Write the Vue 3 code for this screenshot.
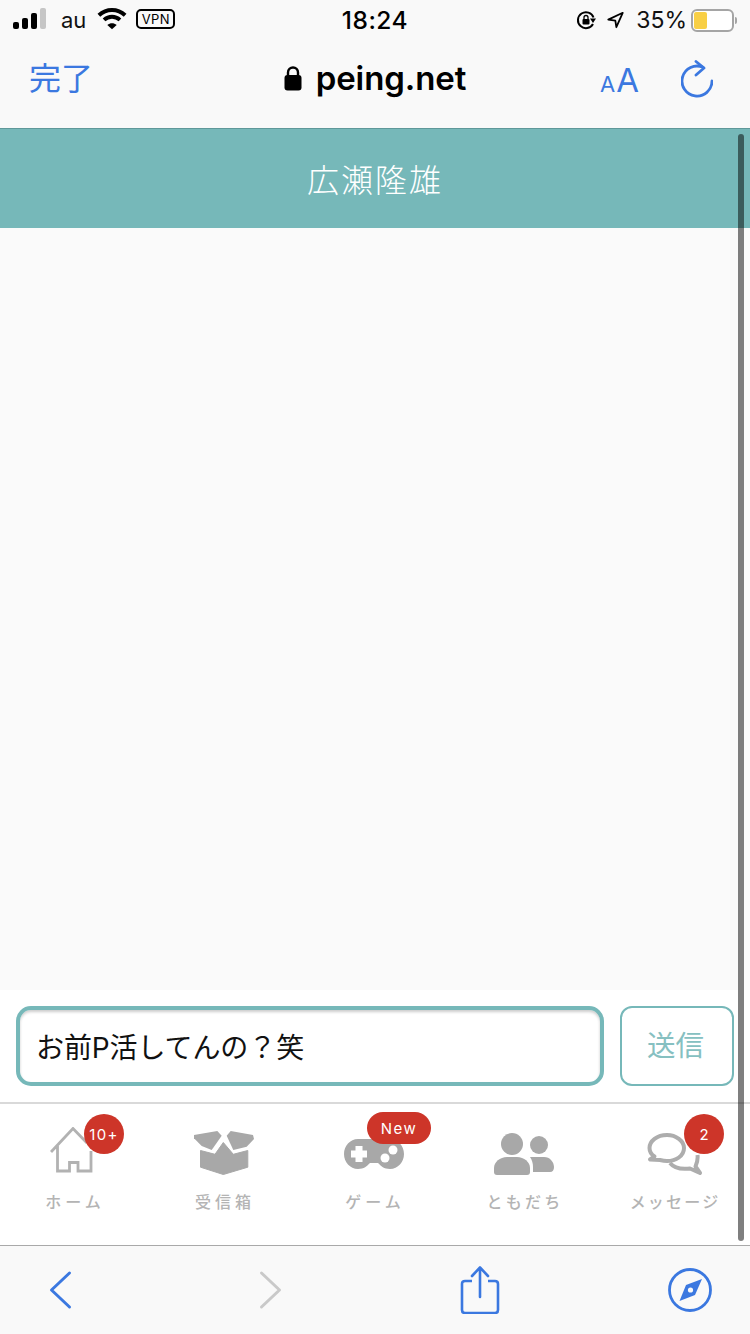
<script setup>
const navItems = [
  { key: 'home', label: 'ホーム', badge: '10+', badgeType: 'round' },
  { key: 'box', label: '受信箱' },
  { key: 'game', label: 'ゲーム', badge: 'New', badgeType: 'pill' },
  { key: 'friends', label: 'ともだち' },
  { key: 'msg', label: 'メッセージ', badge: '2', badgeType: 'round' },
]
</script>

<template>
  <div class="phone">
    <div class="chrome">
      <div class="status">
        <div class="st-left">
          <svg class="signal" width="34" height="22" viewBox="0 0 34 22">
            <rect x="0" y="14" width="6" height="7" rx="2" fill="#000" />
            <rect x="9" y="10" width="6" height="11" rx="2" fill="#000" />
            <rect x="18" y="5" width="6" height="16" rx="2" fill="#000" />
            <rect x="27" y="0" width="6" height="21" rx="2" fill="#c6c6c6" />
          </svg>
          <span class="carrier">au</span>
          <svg class="wifi" width="30" height="23" viewBox="0 0 32 24">
            <path d="M2 8.5C10 1 22 1 30 8.5" fill="none" stroke="#000" stroke-width="4.2" />
            <path d="M7.5 13.5C12.5 9 19.5 9 24.5 13.5" fill="none" stroke="#000" stroke-width="4.2" />
            <path d="M11 19L16 23.5L21 19C18 16.3 14 16.3 11 19Z" fill="#000" />
          </svg>
          <span class="vpn">VPN</span>
        </div>
        <div class="time">18:24</div>
        <div class="st-right">
          <svg width="20" height="20" viewBox="0 0 20 20">
            <path d="M17.5 7.5A8 8 0 1 0 17 14" fill="none" stroke="#000" stroke-width="2" />
            <path d="M14 8.5L20 8.5L17 13Z" fill="#000" />
            <rect x="6.5" y="9" width="7" height="5.5" rx="1" fill="#000" />
            <path d="M8 9.5V7.5a2 2 0 0 1 4 0V9.5" fill="none" stroke="#000" stroke-width="1.3" />
          </svg>
          <svg class="loc" width="17" height="18" viewBox="0 0 20 20">
            <path d="M18.5 1.5L1.5 9.5L9.8 10.6L11 18.5Z" fill="none" stroke="#000" stroke-width="2.1" stroke-linejoin="round" />
          </svg>
          <span class="pct">35%</span>
          <div class="battery"><div class="level"></div></div>
          <div class="nub"></div>
        </div>
      </div>
      <div class="urlbar">
        <div class="done">完了</div>
        <div class="domain">
          <svg width="18" height="26" viewBox="0 0 18 26">
            <path d="M4 11V7.5a5 5 0 0 1 10 0V11" fill="none" stroke="#000" stroke-width="2.4" />
            <rect x="0.5" y="10" width="17" height="15.5" rx="3" fill="#000" />
          </svg>
          <span>peing.net</span>
        </div>
        <div class="actions">
          <div class="aa"><span class="a-small">A</span><span class="a-big">A</span></div>
          <svg width="32" height="38" viewBox="0 0 32 38">
            <path d="M31 21A15 15 0 1 1 22 7.3" fill="none" stroke="#3b78e0" stroke-width="2.8" stroke-linecap="round" />
            <path d="M15 1.5L23 8L15 15" fill="none" stroke="#3b78e0" stroke-width="2.8" stroke-linecap="round" stroke-linejoin="round" />
          </svg>
        </div>
      </div>
    </div>

    <header class="title">広瀬隆雄</header>
    <main class="content"></main>

    <form class="composer" @submit.prevent>
      <div class="input">お前P活してんの？笑</div>
      <button class="send" type="button">送信</button>
    </form>

    <nav class="tabs">
      <div v-for="item in navItems" :key="item.key" class="tab" :class="'tab-' + item.key">
        <div class="ico">
          <svg v-if="item.key === 'home'" width="46" height="46" viewBox="0 0 46 46">
            <path d="M1 25L23 1.5L37 16M7.5 19V44H19.5V35.5H28V44H41V24" fill="none" stroke="#b2b2b2" stroke-width="2.8" />
          </svg>
          <svg v-else-if="item.key === 'box'" width="64" height="44" viewBox="0 0 64 44">
            <path d="M2 4L25.3 0L29.7 4.7L19.7 19L9.7 15L2 7.3Z" fill="#a8a8a8" />
            <path d="M34.7 4.7L38.7 0L61 4L62 8L54.7 15.7L41.3 19Z" fill="#a8a8a8" />
            <path d="M8.5 19.5L23 23.3L31.3 11.5L41.3 23.3L55.8 19.5V36.2L31.3 43.5L8.5 36.2Z" fill="#a8a8a8" stroke="#a8a8a8" stroke-width="1" stroke-linejoin="round" />
          </svg>
          <svg v-else-if="item.key === 'game'" width="60" height="30" viewBox="0 0 60 30">
            <path d="M14 0H46C54 0 60 7 60 15C60 23 54 30 46 30C40 30 37 27 34 24H26C23 27 20 30 14 30C6 30 0 23 0 15C0 7 6 0 14 0Z" fill="#a8a8a8" />
            <path d="M11.5 7H18.5V11.5H23V18.5H18.5V23H11.5V18.5H7V11.5H11.5Z" fill="#fff" />
            <circle cx="49" cy="11" r="4.5" fill="#fff" />
            <circle cx="41" cy="19" r="4.5" fill="#fff" />
          </svg>
          <svg v-else-if="item.key === 'friends'" width="60" height="42" viewBox="0 0 60 42">
            <circle cx="18" cy="11" r="11" fill="#a8a8a8" />
            <circle cx="45" cy="12" r="9" fill="#a8a8a8" />
            <path d="M0 35C0 29 6 24 13 24H23C30 24 36 29 36 35V39Q36 42 33 42H3Q0 42 0 39Z" fill="#a8a8a8" />
            <path d="M36 24H50C56 24 60 29 60 34Q60 39 56 39H39V34C39 30 38 27 36 24Z" fill="#a8a8a8" />
          </svg>
          <svg v-else width="56" height="44" viewBox="0 0 56 44">
            <path d="M38 17C38 10 30 4 21 4C11 4 3.5 10 3.5 17C3.5 20.5 5.5 23.5 8.5 25.5L4 28.5L14 29C16 29.5 19 30 21 30C30 30 38 25 38 17Z" fill="none" stroke="#adadad" stroke-width="4" stroke-linejoin="round" />
            <path d="M24 32C28 37 36 38.5 44 37.5L54 42L49.5 35.5C51 32 52 28 51.5 24" fill="none" stroke="#adadad" stroke-width="4" stroke-linejoin="round" />
          </svg>
          <span v-if="item.badge" class="badge" :class="[item.badgeType, item.key]">{{ item.badge }}</span>
        </div>
        <div class="label">{{ item.label }}</div>
      </div>
    </nav>

    <div class="toolbar">
      <svg width="25" height="40" viewBox="0 0 25 40">
        <path d="M21.5 3L3.5 20L21.5 37" fill="none" stroke="#3b78e0" stroke-width="3" stroke-linecap="round" stroke-linejoin="round" />
      </svg>
      <svg width="25" height="40" viewBox="0 0 25 40">
        <path d="M3.5 3L21.5 20L3.5 37" fill="none" stroke="#c9c9c9" stroke-width="3" stroke-linecap="round" stroke-linejoin="round" />
      </svg>
      <svg width="40" height="48" viewBox="0 0 40 48">
        <path d="M12 15H5Q2 15 2 18V44Q2 47 5 47H35Q38 47 38 44V18Q38 15 35 15H28" fill="none" stroke="#3b78e0" stroke-width="2.6" />
        <path d="M20 31V2M12 10L20 1.5L28 10" fill="none" stroke="#3b78e0" stroke-width="2.6" stroke-linecap="round" stroke-linejoin="round" />
      </svg>
      <svg width="46" height="46" viewBox="0 0 46 46">
        <circle cx="23" cy="23" r="20.5" fill="none" stroke="#3b78e0" stroke-width="2.8" />
        <path d="M35 12L28 28L12.5 34L19 18Z" fill="#3b78e0" />
        <circle cx="23.5" cy="23" r="2.6" fill="#f9f9f9" />
      </svg>
    </div>

    <div class="scrollbar"></div>
  </div>
</template>

<style>
html, body { margin: 0; padding: 0; }
</style>

<style scoped>
.phone {
  position: relative;
  width: 750px;
  height: 1334px;
  overflow: hidden;
  display: flex;
  flex-direction: column;
  background: #fff;
  font-family: Inter, "Noto Sans CJK JP", sans-serif;
}
.chrome {
  height: 128px;
  flex: none;
  background: #f9f9f9;
  border-bottom: 1px solid #5f9899;
}
.status {
  height: 40px;
  display: grid;
  grid-template-columns: 1fr auto 1fr;
  align-items: center;
  padding: 0 13px 0 13px;
}
.st-left { display: flex; align-items: center; }
.signal { margin-right: 14px; margin-top: -2px; }
.carrier { font-size: 22px; color: #111; margin-right: 11px; margin-top: -1px; }
.wifi { margin-top: -3px; margin-right: 9px; }
.vpn {
  width: 35px; height: 16px;
  border: 2px solid #000;
  border-radius: 5px;
  font-size: 13px;
  line-height: 16px;
  text-align: center;
  letter-spacing: 0.4px;
  margin-top: -2px;
  color: #000;
}
.time { font-size: 24.5px; font-weight: 500; color: #000; letter-spacing: 0.5px; margin-top: -1px; }
.st-right { display: flex; align-items: center; justify-content: flex-end; }
.loc { margin-left: 11px; margin-right: 12px; }
.pct { font-size: 23px; color: #111; margin-right: 4px; margin-top: -1px; }
.battery {
  width: 43px; height: 23px;
  box-sizing: border-box;
  border: 2.5px solid #a5a5a5;
  border-radius: 6px;
  padding: 1px;
  background: #fff;
}
.level { width: 13px; height: 100%; background: #f8cf45; border-radius: 2px; }
.nub { width: 2px; height: 7px; background: #a5a5a5; margin-left: 1px; border-radius: 0 2px 2px 0; }

.urlbar {
  height: 78px;
  display: grid;
  grid-template-columns: 1fr auto 1fr;
  align-items: center;
  padding: 0 29px;
  box-sizing: border-box;
}
.done { font-size: 32px; color: #3b78e0; font-weight: 400; line-height: 1; }
.domain {
  display: flex; align-items: center; gap: 14px;
  font-size: 33px; font-weight: 600; color: #000;
}
.domain svg { margin-top: -2px; }
.domain span { margin-top: -2px; letter-spacing: -0.1px; }
.actions { display: flex; justify-content: flex-end; align-items: center; gap: 42px; margin-right: 8px; }
.aa { display: flex; align-items: baseline; color: #3b78e0; line-height: 1; gap: 1px; margin-top: 2px; font-weight: 400; }
.a-small { font-size: 22px; }
.a-big { font-size: 33px; }

.title {
  height: 99px;
  flex: none;
  background: #76b8b9;
  color: #fff;
  font-size: 32px;
  letter-spacing: 2px;
  display: flex;
  align-items: center;
  justify-content: center;
  font-weight: 300;
  padding-bottom: 2px;
  box-sizing: border-box;
}
.content { height: 762px; flex: none; background: #fafafa; }

.composer {
  height: 112px;
  flex: none;
  margin: 0;
  display: flex;
  align-items: flex-start;
  padding: 16px 16px 0 16px;
  box-sizing: border-box;
  background: #fff;
  gap: 16px;
}
.input {
  width: 588px;
  height: 80px;
  box-sizing: border-box;
  border: 4px solid #76b8b9;
  border-radius: 15px;
  background: #fff;
  box-shadow: inset 0 2px 3px rgba(0, 0, 0, 0.2);
  font-size: 28px;
  line-height: 76px;
  padding-left: 16px;
  color: #111;
  letter-spacing: -0.1px;
}
.send {
  width: 114px;
  height: 80px;
  box-sizing: border-box;
  background: #fff;
  border: 2px solid #76b8b9;
  border-radius: 12px;
  color: #86c0c1;
  font-family: inherit;
  font-size: 28.5px;
  letter-spacing: 0;
  padding: 0 3px 5px 0;
}

.tabs {
  height: 144px;
  flex: none;
  box-sizing: border-box;
  display: flex;
  background: #fff;
  border-top: 2px solid #d9d9d9;
  border-bottom: 1px solid #a9a9a9;
}
.tab {
  width: 150px;
  display: flex;
  flex-direction: column;
  align-items: center;
}
.ico {
  position: relative;
  height: 71px;
  width: 100%;
  display: flex;
  align-items: flex-end;
  justify-content: center;
}
.ico svg { margin-right: 2px; }
.tab-home .ico svg { margin-right: 4px; margin-bottom: 2px; }
.tab-game .ico svg { margin-bottom: 6px; }
.label {
  margin-top: 16px;
  font-size: 16px;
  line-height: 22px;
  letter-spacing: 4px;
  color: #b4b4b4;
  white-space: nowrap;
  font-weight: 500;
}
.tab-friends .label { letter-spacing: 3.3px; }
.tab-msg .label { letter-spacing: 2.2px; }
.badge {
  position: absolute;
  background: #cd3529;
  color: #fff;
  display: flex;
  align-items: center;
  justify-content: center;
  font-size: 15px;
  letter-spacing: 1.4px;
}
.badge.round { width: 40px; height: 40px; border-radius: 50%; top: 10px; }
.badge.home { left: 84px; }
.badge.msg { left: 84px; letter-spacing: 0; }
.badge.pill { width: 64px; height: 32px; border-radius: 16px; top: 8px; left: 67px; }

.toolbar {
  height: 88px;
  flex: none;
  background: #f9f9f9;
  display: grid;
  grid-template-columns: 210px 202px 207px 46px;
  align-items: center;
  padding-left: 48px;
  box-sizing: border-box;
}

.scrollbar {
  position: absolute;
  left: 738px;
  top: 134px;
  width: 6px;
  height: 1107px;
  border-radius: 3px;
  background: rgba(0, 0, 0, 0.5);
}
</style>
